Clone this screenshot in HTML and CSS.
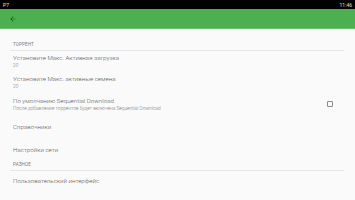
FILE: index.html
```html
<!DOCTYPE html>
<html>
<head>
<meta charset="utf-8">
<link rel="stylesheet" href="styles.css">
</head>
<body>
<div class="status">
  <span class="st-left">Р7</span>
  <span class="st-right">11:46</span>
</div>
<div class="toolbar">
  <svg class="back" width="8" height="8" viewBox="0 0 24 24"><path d="M20 11H7.83l5.59-5.59L12 4l-8 8 8 8 1.41-1.41L7.83 13H20v-2z" fill="#1b5e20"/></svg>
</div>
<div class="content">
  <div class="cat first">ТОРРЕНТ</div>
  <div class="item two">
    <div class="text">
      <div class="title">Установите Макс. Активная загрузка</div>
      <div class="sub">20</div>
    </div>
  </div>
  <div class="item two">
    <div class="text">
      <div class="title">Установите Макс. активные семена</div>
      <div class="sub">20</div>
    </div>
  </div>
  <div class="item two">
    <div class="text">
      <div class="title">По умолчанию Sequential Download</div>
      <div class="sub">После добавления торрентов будет включена Sequential Download</div>
    </div>
    <div class="check"></div>
  </div>
  <div class="item one tall"><div class="title">Справочники</div></div>
  <div class="item one"><div class="title">Настройки сети</div></div>
  <div class="cat">РАЗНОЕ</div>
  <div class="item one"><div class="title">Пользовательский интерфейс</div></div>
</div>
</body>
</html>
```
FILE: styles.css
```css
* { box-sizing: border-box; }
html, body { margin: 0; padding: 0; }
body {
  width: 355px;
  height: 200px;
  overflow: hidden;
  background: #fafafa;
  font-family: Roboto, "Noto Sans", sans-serif;
}
.status {
  height: 9px;
  background: #000;
  color: #e0e0e0;
  font-size: 5px;
  display: flex;
  justify-content: space-between;
  align-items: center;
  padding: 0 3px;
}
.toolbar {
  height: 20px;
  background: #4caf50;
  display: flex;
  align-items: center;
  padding-left: 9px;
  border-bottom: 1px solid #6fbf72;
}
.back { display: block; }
.content {
  padding: 0 11px 0 10px;
}
.cat {
  font-size: 4.6px;
  line-height: 6px;
  color: #7a7a7a;
  padding: 1px 0 1.5px 3px;
  border-bottom: 1px solid #e6e6e6;
  letter-spacing: 0.1px;
}
.cat.first { padding-top: 13px; }
.item {
  display: flex;
  align-items: center;
  padding-left: 3px;
}
.item.two { height: 21.5px; }
.item.one { height: 22px; }
.item.one.tall { height: 24px; }
.text { flex: 1; }
.title {
  font-size: 6.2px;
  line-height: 7px;
  font-weight: 300;
  color: #5a5a5a;
}
.sub {
  font-size: 4.8px;
  line-height: 5px;
  font-weight: 300;
  color: #7a7a7a;
  margin-top: 1px;
}
.check {
  width: 6px;
  height: 6px;
  border: 1px solid #8a8a8a;
  border-radius: 1px;
  margin-right: 11px;
}
```
